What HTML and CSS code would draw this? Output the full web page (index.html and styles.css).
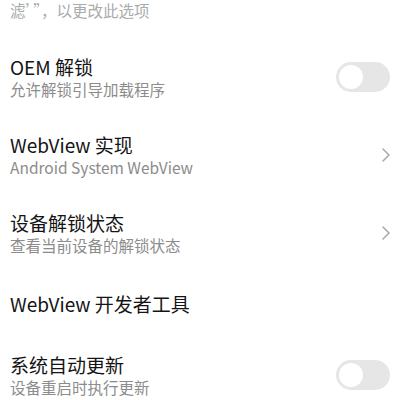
FILE: index.html
```html
<!DOCTYPE html>
<html lang="zh-CN">
<head>
    <meta charset="UTF-8">
    <meta name="viewport" content="width=device-width, initial-scale=1.0">
    <title>开发者选项</title>
    <link rel="stylesheet" href="styles.css">
</head>
<body>
    <div class="settings">
        <p class="note">滤’”，以更改此选项</p>

        <div class="item">
            <div class="item-text">
                <div class="item-title">OEM 解锁</div>
                <div class="item-summary">允许解锁引导加载程序</div>
            </div>
            <span class="switch"><span class="knob"></span></span>
        </div>

        <div class="item">
            <div class="item-text">
                <div class="item-title">WebView 实现</div>
                <div class="item-summary">Android System WebView</div>
            </div>
            <svg class="chevron" viewBox="0 0 10 16" width="10" height="16">
                <path d="M2 2 L8 8 L2 14" fill="none" stroke="#a8a8a8" stroke-width="1.5" stroke-linecap="round" stroke-linejoin="round"/>
            </svg>
        </div>

        <div class="item">
            <div class="item-text">
                <div class="item-title">设备解锁状态</div>
                <div class="item-summary">查看当前设备的解锁状态</div>
            </div>
            <svg class="chevron" viewBox="0 0 10 16" width="10" height="16">
                <path d="M2 2 L8 8 L2 14" fill="none" stroke="#a8a8a8" stroke-width="1.5" stroke-linecap="round" stroke-linejoin="round"/>
            </svg>
        </div>

        <div class="item item-single">
            <div class="item-text">
                <div class="item-title">WebView 开发者工具</div>
            </div>
        </div>

        <div class="item">
            <div class="item-text">
                <div class="item-title">系统自动更新</div>
                <div class="item-summary">设备重启时执行更新</div>
            </div>
            <span class="switch"><span class="knob"></span></span>
        </div>
    </div>
</body>
</html>
```

FILE: styles.css
```css
/* === SETTINGS LIST === */
body {
    margin: 0;
    background-color: #ffffff;
    font-family: "Noto Sans CJK SC", "Noto Sans", sans-serif;
    overflow: hidden;
}

.settings {
    display: flex;
    flex-direction: column;
}

.note {
    margin: 0;
    padding: 1px 10px 18px;
    font-size: 15.5px;
    line-height: 19px;
    color: #ababab;
}

.item {
    display: flex;
    align-items: center;
    justify-content: space-between;
    height: 78px;
    padding: 0 10px;
    box-sizing: border-box;
}

.item-single {
    height: 64px;
}

.item-text {
    display: flex;
    flex-direction: column;
    gap: 1px;
}

.item-title {
    font-size: 19px;
    line-height: 22px;
    color: #141414;
}

.item-summary {
    font-size: 15.5px;
    line-height: 20px;
    color: #8c8c8c;
}

.switch {
    display: flex;
    align-items: center;
    width: 54px;
    height: 30px;
    padding: 0 3px;
    box-sizing: border-box;
    border-radius: 15px;
    background-color: #e6e6e6;
}

.knob {
    width: 24px;
    height: 24px;
    border-radius: 50%;
    background-color: #ffffff;
}

.chevron {
    margin-right: -1px;
}
```
